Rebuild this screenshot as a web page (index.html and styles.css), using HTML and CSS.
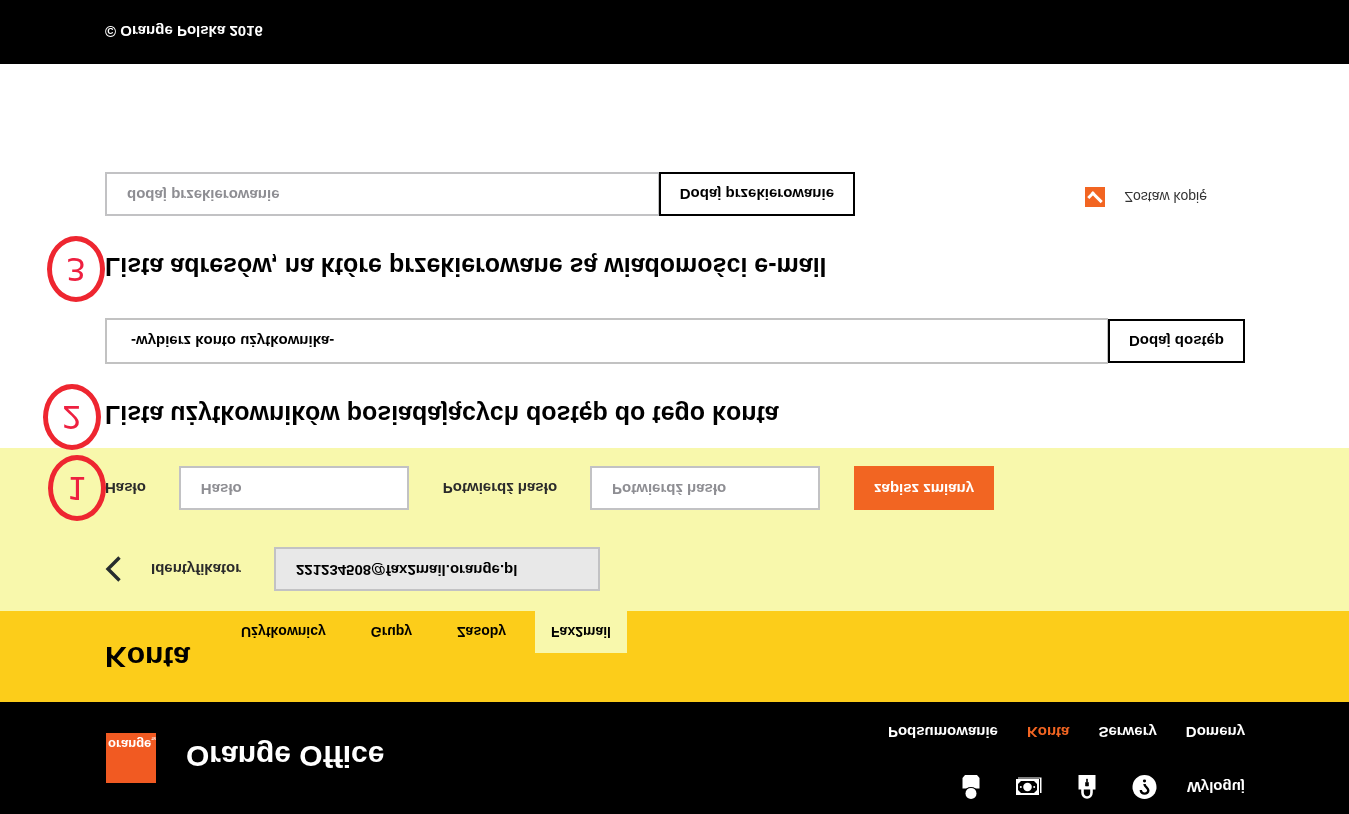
FILE: index.html
```html
<!DOCTYPE html>
<html lang="pl">
<head>
<meta charset="utf-8">
<title>Orange Office</title>
<link rel="stylesheet" href="styles.css">
</head>
<body>
<div class="page">
  <header class="header">
    <div class="brand">
      <div class="logo">orange<span class="logo-tm">TM</span></div>
      <h1 class="brand-name">Orange Office</h1>
    </div>
    <div class="header-side">
      <div class="tools">
        <div class="tool-icons">
          <a class="tool" href="#" aria-label="Profil">
            <svg width="18" height="24" viewBox="0 0 18 24"><path d="M.5 10.500h17V21l-2.500 3H3L.5 21z" fill="#fff"/><circle cx="9" cy="5.500" r="6.600" fill="#000"/><circle cx="9" cy="5.500" r="5.500" fill="#fff"/></svg>
          </a>
          <a class="tool" href="#" aria-label="Płatności">
            <svg width="26" height="24" viewBox="0 0 26 24"><path d="M0 4h23v16H0z" fill="#fff"/><path d="M24 6h1.500v15.500H2V20.500h22z" fill="#fff"/><path d="M5 6h13l3 3v6l-3 3H5l-3-3V9z" fill="#000"/><circle cx="11.500" cy="12" r="4.300" fill="#fff"/><circle cx="4.800" cy="12" r="1" fill="#fff"/><circle cx="18.200" cy="12" r="1" fill="#fff"/></svg>
          </a>
          <a class="tool" href="#" aria-label="Hasło">
            <svg width="18" height="24" viewBox="0 0 18 24"><path d="M4.500 11V6.500a4.500 5 0 0 1 9 0V11" fill="none" stroke="#fff" stroke-width="2.600"/><path d="M.5 9.500h17V24H.5z" fill="#fff"/><path d="M7.500 13h3v3.500h-1V20h-1v-3.500h-1z" fill="#000" stroke="#000" stroke-width=".6"/></svg>
          </a>
          <a class="tool" href="#" aria-label="Pomoc">
            <svg width="25" height="24" viewBox="0 0 25 24"><circle cx="12.500" cy="12" r="12" fill="#fff"/><path d="M8.800 9c0-5 7.700-4.600 7.500-.3-.2 2.800-3.600 3-3.800 6.300" fill="none" stroke="#000" stroke-width="2.400"/><circle cx="12.500" cy="18" r="1.600" fill="#000"/></svg>
          </a>
        </div>
        <a class="nav-link" href="#">Wyloguj</a>
      </div>
      <nav class="nav">
        <a class="nav-link" href="#">Podsumowanie</a>
        <a class="nav-link nav-link-active" href="#">Konta</a>
        <a class="nav-link" href="#">Serwery</a>
        <a class="nav-link" href="#">Domeny</a>
      </nav>
    </div>
  </header>

  <div class="subheader">
    <h2 class="section-name">Konta</h2>
    <nav class="tabs">
      <a class="tab" href="#">Użytkownicy</a>
      <a class="tab" href="#">Grupy</a>
      <a class="tab" href="#">Zasoby</a>
      <a class="tab tab-active" href="#">Fax2mail</a>
    </nav>
  </div>

  <form class="account">
    <div class="account-row">
      <a class="back" href="#" aria-label="Wstecz">
        <svg width="16" height="26" viewBox="0 0 16 26"><path d="M14.500 1.500L3 13l11.500 11.500" fill="none" stroke="#262c2e" stroke-width="3.400"/></svg>
      </a>
      <div class="field">
        <label for="ident">Identyfikator</label>
        <input class="input input-wide" id="ident" type="text" value="221234508@fax2mail.orange.pl" readonly>
      </div>
    </div>
    <div class="account-row">
      <span class="mark mark-1">1</span>
      <div class="field">
        <label for="pass">Hasło</label>
        <input class="input" id="pass" type="password" placeholder="Hasło">
      </div>
      <div class="field">
        <label for="pass2">Potwierdź hasło</label>
        <input class="input" id="pass2" type="password" placeholder="Potwierdź hasło">
      </div>
      <button class="save" type="button">zapisz zmiany</button>
    </div>
  </form>

  <main class="content">
    <h2 class="heading" id="users-title"><span class="mark mark-2">2</span>Lista użytkowników posiadających dostęp do tego konta</h2>
    <div class="add-row">
      <select class="select" aria-labelledby="users-title"><option>-wybierz konto użytkownika-</option></select>
      <button class="add" type="button">Dodaj dostęp</button>
    </div>
    <h2 class="heading" id="mail-title"><span class="mark mark-3">3</span>Lista adresów, na które przekierowane są wiadomości e-mail</h2>
    <div class="redirect-row">
      <div class="redirect">
        <input class="input redirect-input" type="text" placeholder="dodaj przekierowanie" aria-labelledby="mail-title">
        <button class="add" type="button">Dodaj przekierowanie</button>
      </div>
      <label class="copy"><input class="check" type="checkbox" checked>Zostaw kopię</label>
    </div>
  </main>

  <footer class="footer">© Orange Polska 2016</footer>
</div>
</body>
</html>
```

FILE: styles.css
```css
* {
  box-sizing: border-box;
}

body {
  margin: 0;
  background: #fff;
  color: #000;
  font: bold 15px/20px "Liberation Sans", Arial, sans-serif;
}

/* The whole page is mirrored top to bottom. */
.page {
  display: flex;
  flex-direction: column;
  min-height: 100vh;
  transform: scaleY(-1);
}

a {
  color: inherit;
  text-decoration: none;
}

h1,
h2 {
  margin: 0;
}

input,
select,
button {
  margin: 0;
  border-radius: 0;
  font: inherit;
}

.header,
.subheader,
.account,
.content,
.footer {
  padding-left: 105px;
  padding-right: 104px;
}

.header {
  display: flex;
  justify-content: space-between;
  padding-top: 15px;
  padding-bottom: 20px;
  background: #000;
  color: #fff;
}

.brand {
  display: flex;
  align-items: flex-end;
  gap: 30px;
  padding: 0 0 11px 1px;
}

.logo {
  display: flex;
  align-items: flex-end;
  width: 50px;
  height: 50px;
  padding: 0 0 3px 2px;
  background: #f15a22;
  font-size: 13px;
  line-height: 16px;
}

.logo-tm {
  font-size: 3px;
  line-height: 4px;
}

.brand-name {
  font-size: 30px;
  line-height: 46px;
}

.header-side {
  display: flex;
  flex-direction: column;
  align-items: flex-end;
  gap: 33px;
}

.tools {
  display: flex;
  align-items: center;
  gap: 29px;
}

.tool-icons {
  display: flex;
  gap: 32px;
}

.tool {
  display: flex;
  justify-content: center;
  min-width: 26px;
}

.nav {
  display: flex;
  gap: 29px;
}

.nav-link-active {
  color: #f26522;
}

.subheader {
  display: flex;
  gap: 35px;
  background: #fccd1a;
}

.section-name {
  padding: 28px 0 29px;
  font-size: 30px;
  line-height: 34px;
}

.tabs {
  display: flex;
  align-items: flex-end;
  gap: 13px;
  font-size: 14px;
}

.tab {
  padding: 0 16px;
  line-height: 42px;
}

.tab-active {
  background: #f8f8ac;
}

.account {
  display: flex;
  flex-direction: column;
  gap: 37px;
  padding-top: 20px;
  padding-bottom: 18px;
  background: #f8f8ac;
  color: #2b2b2b;
}

.account-row {
  position: relative;
  display: flex;
  align-items: center;
  gap: 34px;
}

.back {
  display: flex;
  margin-right: -4px;
}

.field {
  display: flex;
  align-items: center;
  gap: 33px;
}

.input {
  width: 230px;
  height: 44px;
  padding: 0 20px 3px;
  border: 2px solid #c2c2c4;
  background: #fff;
  color: #000;
}

.input::placeholder {
  color: #8e8e93;
  opacity: 1;
}

.input-wide {
  width: 326px;
  background: #e8e8e8;
}

.save {
  height: 44px;
  padding: 0 20px 2px;
  border: 0;
  background: #f26522;
  color: #fff;
}

.mark {
  position: absolute;
  width: 58px;
  height: 66px;
  border: 5px solid #ee2630;
  border-radius: 50%;
  color: #ee2040;
  font: 32px/56px "DejaVu Sans", sans-serif;
  text-align: center;
}

.mark-1 {
  top: -11px;
  left: -57px;
}

.mark-2 {
  top: -20px;
  left: -62px;
}

.mark-3 {
  top: -20px;
  left: -58px;
}

.content {
  flex: 1;
  padding-top: 18px;
  padding-bottom: 108px;
}

.heading {
  position: relative;
  margin-bottom: 36px;
  font-size: 25px;
  line-height: 30px;
}

.add-row {
  display: flex;
  align-items: center;
  margin-bottom: 36px;
}

.select {
  flex: 1;
  min-width: 0;
  height: 46px;
  padding: 0 24px;
  border: 2px solid #c2c2c2;
  border-right-width: 1px;
  appearance: none;
  background: #fff;
  color: #000;
}

.add {
  height: 44px;
  padding: 0 19px;
  border: 2px solid #000;
  background: #fff;
  color: #000;
  white-space: nowrap;
}

.redirect-row {
  display: flex;
  align-items: center;
  justify-content: space-between;
}

.redirect {
  display: flex;
  width: 750px;
}

.redirect-input {
  flex: 1;
  min-width: 0;
  border-right-width: 1px;
}

.copy {
  display: flex;
  align-items: center;
  gap: 20px;
  padding: 0 38px 6px 0;
  color: #333;
  font-size: 14px;
  font-weight: normal;
}

.check {
  display: grid;
  place-content: center;
  width: 20px;
  height: 20px;
  appearance: none;
  background: #f26522;
}

.check:checked::before {
  content: "";
  box-sizing: border-box;
  width: 14px;
  height: 8px;
  margin-bottom: 4px;
  border: solid #fff;
  border-width: 0 0 3px 3px;
  transform: rotate(-45deg);
}

.footer {
  padding-top: 23px;
  padding-bottom: 21px;
  background: #000;
  color: #fff;
}
```
